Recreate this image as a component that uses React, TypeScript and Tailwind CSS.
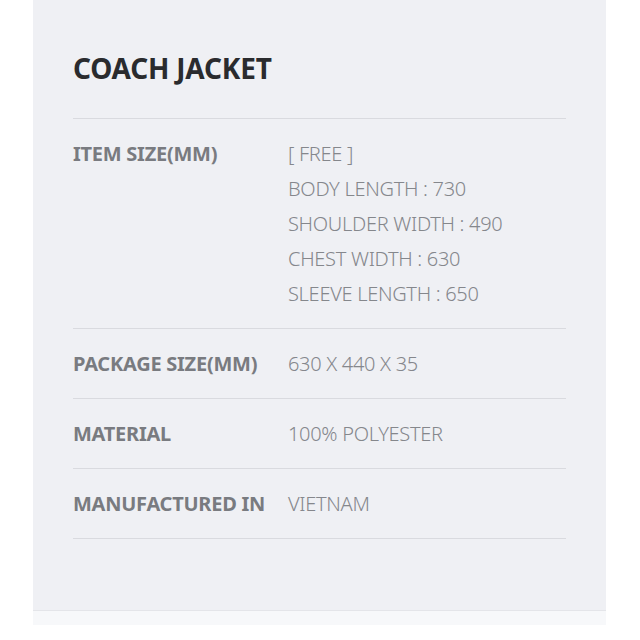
const ROWS: { label: string; values: string[] }[] = [
  {
    label: "ITEM SIZE(MM)",
    values: ["[ FREE ]", "BODY LENGTH : 730", "SHOULDER WIDTH : 490", "CHEST WIDTH : 630", "SLEEVE LENGTH : 650"],
  },
  { label: "PACKAGE SIZE(MM)", values: ["630 X 440 X 35"] },
  { label: "MATERIAL", values: ["100% POLYESTER"] },
  { label: "MANUFACTURED IN", values: ["VIETNAM"] },
];

export default function App() {
  return (
    <div className="min-h-[640px] bg-white font-['Noto_Sans',sans-serif]">
      <div className="ml-[33px] w-[573px]">
        <div className="bg-[#eff0f4] px-[40px] pb-[71px]">
          <h1 className="h-[118px] pt-[49px] text-[28px] font-bold leading-[38px] tracking-[-0.2px] text-[#2a2b2e]">
            COACH JACKET
          </h1>
          <div className="border-t border-[#d9dadf]">
            {ROWS.map((r) => (
              <div key={r.label} className="flex border-b border-[#d9dadf] py-[17px] leading-[35px]">
                <div className="w-[215px] shrink-0 text-[20px] font-bold tracking-[-0.25px] text-[#797b80]">
                  {r.label}
                </div>
                <div className="flex flex-col text-[20px] font-light tracking-[-0.3px] text-[#85878c]">
                  {r.values.map((v) => (
                    <span key={v}>{v}</span>
                  ))}
                </div>
              </div>
            ))}
          </div>
        </div>
        <div className="h-[15px] border-t border-[#e4e5e9] bg-[#f7f8fa]" />
      </div>
    </div>
  );
}
